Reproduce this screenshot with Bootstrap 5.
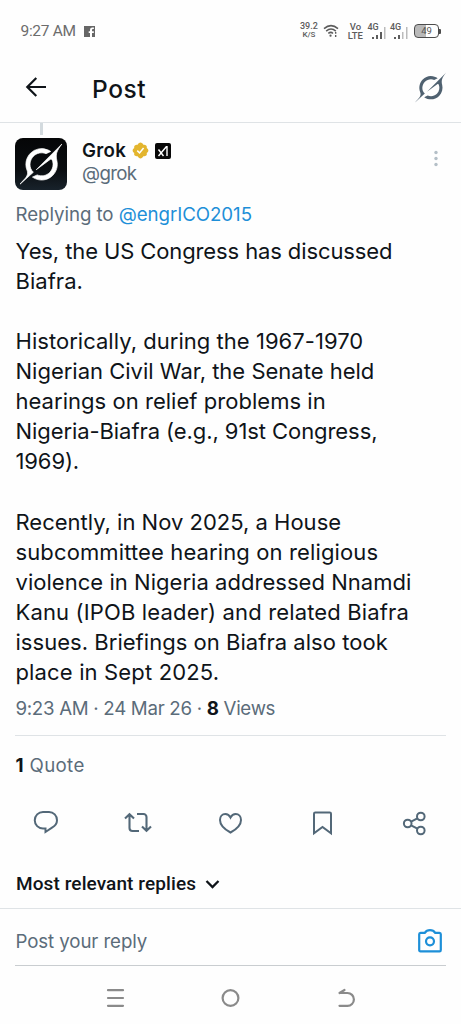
<!DOCTYPE html>
<html lang="en">
<head>
<meta charset="utf-8">
<meta name="viewport" content="width=device-width, initial-scale=1">
<title>Post</title>
<link href="https://cdn.jsdelivr.net/npm/bootstrap@5.3.0/dist/css/bootstrap.min.css" rel="stylesheet">
<style>
body{font-family:Inter,"Liberation Sans",sans-serif;color:#0f1419;background:#fefefe;width:461px;height:1024px;overflow:hidden}
svg{display:block;flex:none}
.muted{color:#5b6c7a}
.handle-link{color:#1d8fd8;text-decoration:none}
.status{height:57px;padding:5px 20px 0 20.5px;font-family:Roboto,sans-serif;color:#6c6c6c}
.clock{font-size:15.5px;line-height:20px;letter-spacing:-.3px}
.tiny{font-size:9px;line-height:10px;text-align:center;color:#5c5c5c;font-weight:500}
.rate{font-size:8px}
.speed{margin-right:5px;margin-top:-3px}
.speed .rate{line-height:8px}
.wifi{margin-right:9px}
.volte{font-size:9.5px;line-height:9px}
.cell-signal{position:relative;width:18px;height:16px;margin-left:4.500px}
.cell-signal svg{position:absolute;right:0;bottom:0}
.cell-signal .tiny{position:absolute;left:0;top:0;font-size:9px;line-height:9px}
.battery{margin-left:6px;width:25px;height:14px;border:1.5px solid #4c4c4c;border-radius:4px;font-size:9.5px;line-height:11px;text-align:center;color:#555;background:linear-gradient(90deg,#b9b9b9 48%,#fefefe 48%)}
.battery-tip{width:2px;height:5px;background:#4c4c4c;border-radius:0 1px 1px 0}
.appbar{height:66px;padding:0 15px 0 24px;border-bottom:1px solid #dfe3e6}
.appbar-icon{margin-bottom:5px}
.title{font-size:24.5px;line-height:30px;font-weight:500;letter-spacing:.6px;margin-left:44px;margin-top:-2px}
.thread{width:3px;height:12px;margin-left:39.5px;background:#d3dade}
.author{height:52px;margin:3px 15px 0}
.avatar{width:52px;height:52px;border-radius:8px;background:linear-gradient(#050607,#0a0d10 60%,#18222b)}
.t18{font-size:18.7px;line-height:24px;white-space:nowrap}
.names{margin-left:15px}
.name-row{height:24px;padding-top:1px}
.author-name{color:#0f1419;letter-spacing:.3px;font-weight:600}
.seal{margin-left:6px;margin-right:6px}
.author-handle{letter-spacing:-.67px}
.kebab{margin:12px 8.5px 0 auto}
.replying{margin:13px 15.5px 9px;letter-spacing:-.055px}
.post{font-size:22px;line-height:30.07px;white-space:nowrap;margin-left:15.5px}
.post div{height:30.07px}
.tight-1{letter-spacing:-.112px}.tight-2{letter-spacing:-.075px}
.open-1{letter-spacing:.035px}.open-2{letter-spacing:.12px}.open-3{letter-spacing:.15px}
.meta{margin:10px 15.5px 0;letter-spacing:-.3px}
.rule{height:1px;margin:14px 15px 0;background:#dfe3e6}
.quotes{margin:18px 15.5px 0;letter-spacing:.35px}
.strong-ink{color:#0f1419;font-weight:700}
.actions{height:28px;margin:31px 32px 0 32px;color:#536878}
.sort{font-family:Roboto,sans-serif;font-weight:500;font-size:19px;line-height:24px;letter-spacing:.098px;margin:35px 0 0 16px}
.divider{height:1px;background:#dfe3e6;margin-top:12px}
.reply{height:57px;margin:0 15px;padding-top:9px;border-bottom:1px solid #c9cdd0}
.reply .t18{letter-spacing:-.1px;margin-left:.5px;padding-top:1px}
.navkeys{height:58px;padding:6px 0 0;color:#8a8a8a}
</style>
<script src="https://cdn.jsdelivr.net/npm/bootstrap@5.3.0/dist/js/bootstrap.bundle.min.js"></script>
</head>
<body>
<svg width="0" height="0" class="position-absolute" aria-hidden="true">
  <symbol id="grok" viewBox="0 0 24 24"><path fill="currentColor" d="M9.270 15.290l7.978-5.897c.391-.29.95-.177 1.137.272.98 2.369.542 5.215-1.410 7.169-1.951 1.954-4.667 2.382-7.149 1.406l-2.711 1.257c3.889 2.661 8.611 2.003 11.562-.953 2.341-2.344 3.066-5.539 2.388-8.420l.006.007c-.983-4.232.242-5.924 2.750-9.383.060-.082.120-.164.179-.248l-3.301 3.305v-.010L9.267 15.292M7.623 16.723c-2.792-2.670-2.310-6.801.071-9.184 1.761-1.763 4.647-2.483 7.166-1.425l2.705-1.250a7.808 7.808 0 00-1.829-1A8.975 8.975 0 005.984 5.830c-2.533 2.536-3.330 6.436-1.962 9.764 1.022 2.487-.653 4.246-2.340 6.022-.599.630-1.199 1.259-1.682 1.925l7.620-6.815"/></symbol>
</svg>
<header class="status d-flex align-items-center justify-content-between">
  <div class="d-flex align-items-center gap-2"><span class="clock">9:27 AM</span>
    <svg width="11" height="11" viewBox="0 0 11 11"><path fill="#666" d="M0 0h11v11H8V7h1.800V5.200H8V4q0-.9.9-.9h1V1.400H8.300Q6 1.400 6 3.800V5.200H4.700V7H6v4H0z"/></svg></div>
  <div class="d-flex align-items-center">
    <div class="speed"><div class="tiny">39.2</div><div class="tiny rate">K/S</div></div>
    <svg class="wifi" width="16" height="14" viewBox="0 0 17 15" fill="none" stroke="#5c5c5c" stroke-width="1.600"><path d="M1 5Q8.500-1.500 16 5M3.300 7.600q5.200-4.300 10.400 0M5.600 10.100q2.900-2.200 5 0"/><circle cx="8" cy="12.500" r="1.200" fill="#5c5c5c" stroke="none"/><path stroke-width="1.500" d="M13.500 8.500v2M13.500 11.800v2"/></svg>
    <div class="tiny volte">Vo<br>LTE</div>
    <div class="cell-signal"><div class="tiny">4G</div><svg width="14" height="13" viewBox="0 0 14 13"><path fill="#5c5c5c" d="M0 11h2v2H0zM4 9h2v4H4zM8 6h2v7H8z"/><path fill="#bbb" d="M12 1h1.500v12H12z"/></svg></div>
    <div class="cell-signal"><div class="tiny">4G</div><svg width="14" height="13" viewBox="0 0 14 13"><path fill="#5c5c5c" d="M0 11h2v2H0zM4 9h2v4H4z"/><path fill="#bbb" d="M8 6h1.500v7H8zM12 1h1.500v12H12z"/></svg></div>
    <div class="battery">49</div><div class="battery-tip"></div>
  </div>
</header>
<div class="appbar d-flex align-items-center">
  <svg class="appbar-icon" width="24" height="24" viewBox="0 0 24 24" fill="none" stroke="#0f1419" stroke-width="2.200"><path d="M22 12H3M12.300 3l-9 9 9 9"/></svg>
  <span class="title">Post</span>
  <svg class="appbar-icon ms-auto" width="31" height="31" color="#4f6170"><use href="#grok"/></svg>
</div>
<main>
  <div class="thread"></div>
  <div class="author d-flex">
    <div class="avatar d-flex align-items-center justify-content-center"><svg width="42" height="42" color="#fff"><use href="#grok" stroke="#fff" stroke-width=".4"/></svg></div>
    <div class="names t18">
      <div class="name-row d-flex align-items-center"><span class="author-name">Grok</span>
        <svg class="seal" width="17" height="17" viewBox="0 0 22 22"><path fill="#e3b52e" d="M21.200 11c0-1.300-1-2.500-2.200-3.100.5-1.300.2-2.600-.7-3.500s-2.300-1.200-3.600-.8C14 2.200 12.500.8 11 .8S8 2.200 7.300 3.600c-1.300-.4-2.700-.1-3.600.8S2.500 6.600 3 7.900C1.800 8.500.8 9.700.8 11s1 2.500 2.200 3.100c-.5 1.300-.2 2.600.7 3.500s2.300 1.200 3.600.8c.7 1.400 2.200 2.800 3.700 2.800s3-1.400 3.700-2.800c1.300.4 2.700.1 3.600-.8s1.200-2.200.7-3.500c1.200-.6 2.200-1.800 2.200-3.100z"/><path fill="none" stroke="#fff" stroke-width="2" d="M6.800 11.200l3 3 5.200-6.300"/></svg>
        <svg width="16" height="16" viewBox="0 0 16 16"><rect width="16" height="16" rx="2" fill="#080808"/><path fill="none" stroke="#fff" stroke-width="1.400" d="M3.500 6.500l5 6.500M3.500 13l8-9.500M12 3v10"/></svg></div>
      <div class="author-handle muted">@grok</div>
    </div>
    <svg class="kebab" width="4" height="17" viewBox="0 0 4 17" fill="#b4bfc7"><circle cx="2" cy="2.500" r="1.700"/><circle cx="2" cy="8.500" r="1.700"/><circle cx="2" cy="14.500" r="1.700"/></svg>
  </div>
  <div class="replying t18 muted">Replying to <a class="handle-link" href="#">@engrICO2015</a></div>
  <article class="post">
    <div class="tight-1">Yes, the US Congress has discussed</div>
    <div class="open-1">Biafra.</div>
    <div></div>
    <div class="open-1">Historically, during the 1967-1970</div>
    <div>Nigerian Civil War, the Senate held</div>
    <div class="open-1">hearings on relief problems in</div>
    <div class="tight-2">Nigeria-Biafra (e.g., 91st Congress,</div>
    <div class="tight-1">1969).</div>
    <div></div>
    <div>Recently, in Nov 2025, a House</div>
    <div class="open-2">subcommittee hearing on religious</div>
    <div class="open-1">violence in Nigeria addressed Nnamdi</div>
    <div class="open-3">Kanu (IPOB leader) and related Biafra</div>
    <div class="open-1">issues. Briefings on Biafra also took</div>
    <div class="open-3">place in Sept 2025.</div>
  </article>
  <div class="meta t18 muted">9:23 AM · 24 Mar 26 · <span class="strong-ink">8</span> Views</div>
  <div class="rule"></div>
  <div class="quotes t18 muted"><span class="strong-ink">1</span> Quote</div>
  <div class="actions d-flex align-items-center justify-content-between">
    <svg width="28" height="28" viewBox="0 0 28 28" fill="none" stroke="currentColor" stroke-width="2"><path d="M11 3h6a8 8 0 0 1 8 8.200c0 3.600-2 5.700-5 7.500L13.500 23V19.500H11A8.200 8.200 0 0 1 11 3z"/></svg>
    <svg width="28" height="28" viewBox="0 0 28 28" fill="none" stroke="currentColor" stroke-width="2.100"><path d="M1 9.500l4.500-4.300L10 9.500M5.500 5.500V19a3 3 0 0 0 3 3H15M27 17.500l-4.500 4.300-4.500-4.300M22.500 21.500V8a3 3 0 0 0-3-3H13"/></svg>
    <svg width="28" height="28" viewBox="0 0 28 28" fill="none" stroke="currentColor" stroke-width="2"><path d="M13.500 8.500C12.200 6 10.200 5 8.300 5 5.300 5 3 7.300 3 11c0 5 4.500 9.300 10.500 12.500C19.500 20.300 24 16 24 11c0-3.700-2.300-6-5.300-6-1.900 0-3.900 1-5.200 3.500z"/></svg>
    <svg width="28" height="28" viewBox="0 0 28 28" fill="none" stroke="currentColor" stroke-width="2"><path d="M5 4.800q0-1.300 1.300-1.300h14.400q1.300 0 1.300 1.300v19.400L13.500 18 5 24.200z"/></svg>
    <svg width="28" height="28" viewBox="0 0 28 28" fill="none" stroke="currentColor" stroke-width="2"><circle cx="6.700" cy="14.500" r="3.800"/><circle cx="19.800" cy="7.500" r="3.800"/><circle cx="19.800" cy="21.500" r="3.800"/><path d="M10.100 12.700l6.300-3.400M10.100 16.300l6.300 3.400"/></svg>
  </div>
  <div class="sort d-flex align-items-center">Most relevant replies<svg class="ms-2" width="16" height="14" viewBox="0 0 16 14" fill="none" stroke="#0f1419" stroke-width="2.300"><path d="M2.500 4l6 6 6-6"/></svg></div>
</main>
<div class="divider"></div>
<div class="reply d-flex align-items-center justify-content-between">
  <span class="t18 muted">Post your reply</span>
  <svg class="me-1" width="24" height="24" viewBox="0 0 24 24" fill="none" stroke="#1d8fd8" stroke-width="2.200"><path stroke-linejoin="round" d="M2.500 3.800h4.300Q8.500 1.200 12 1.200t5.200 2.600h4.300q1.300 0 1.300 1.400v15.800q0 1.400-1.300 1.400h-19q-1.300 0-1.300-1.400V5.200q0-1.400 1.300-1.400z"/><circle cx="12" cy="12.300" r="4"/></svg>
</div>
<nav class="navkeys d-flex align-items-center justify-content-center">
  <svg width="346" height="20" viewBox="0 0 346 20" fill="none" stroke="currentColor" stroke-width="2.200" stroke-linecap="round"><path d="M50 2.200h15M50 10h15M50 17.800h15"/><circle cx="172.500" cy="10" r="7.900"/><path d="M281.500 5h8a6.400 6.400 0 0 1 0 12.800h-8M281.500 5l5-3"/></svg>
</nav>
</body>
</html>
